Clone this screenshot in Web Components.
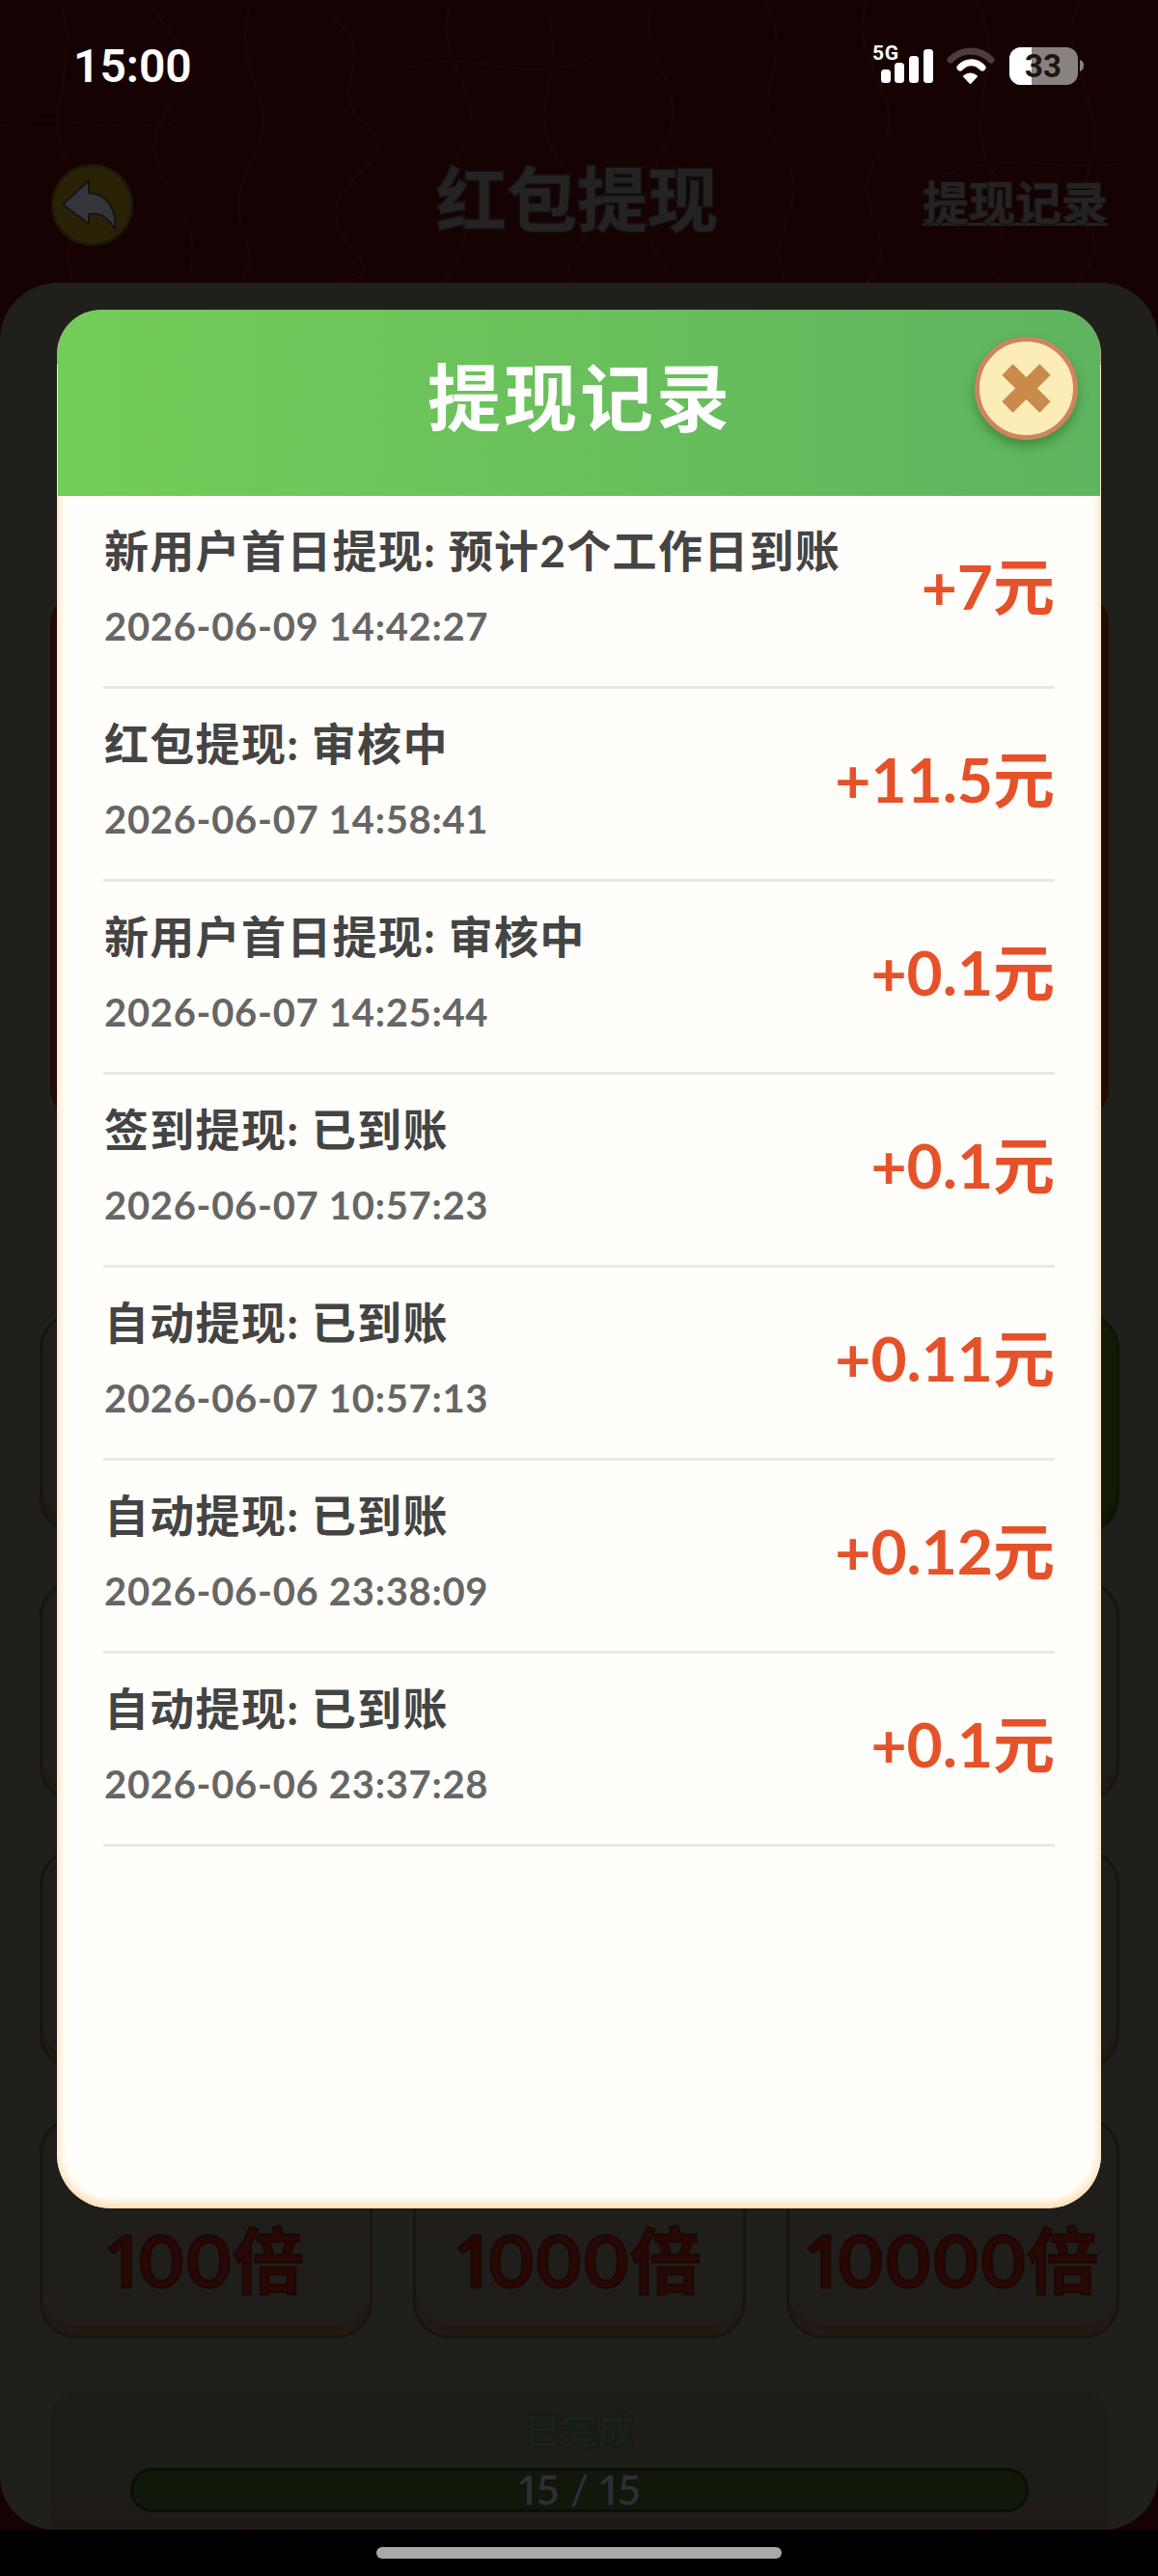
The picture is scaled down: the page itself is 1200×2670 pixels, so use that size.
<!DOCTYPE html>
<html lang="zh-CN"><head><meta charset="utf-8"><title>红包提现</title>
<style>
html,body{margin:0;padding:0;background:#000}
body{width:1200px;height:2670px;overflow:hidden;font-family:"Lato","Noto Sans CJK SC",sans-serif}
</style></head><body>
<app-screen>
  <status-bar slot="status"></status-bar>
  <nav-header slot="nav" heading="红包提现" link="提现记录"></nav-header>
  <main-panel slot="panel">
    <multi-btn></multi-btn><multi-btn></multi-btn><multi-btn tone="green"></multi-btn>
    <multi-btn></multi-btn><multi-btn></multi-btn><multi-btn></multi-btn>
    <multi-btn></multi-btn><multi-btn></multi-btn><multi-btn></multi-btn>
    <multi-btn>100倍</multi-btn><multi-btn>1000倍</multi-btn><multi-btn>10000倍</multi-btn>
  </main-panel>
  <record-modal slot="modal" heading="提现记录">
    <record-row><span slot="name">新用户首日提现: 预计2个工作日到账</span><span slot="time">2026-06-09 14:42:27</span><span slot="amount">+7元</span></record-row>
    <record-row><span slot="name">红包提现: 审核中</span><span slot="time">2026-06-07 14:58:41</span><span slot="amount">+11.5元</span></record-row>
    <record-row><span slot="name">新用户首日提现: 审核中</span><span slot="time">2026-06-07 14:25:44</span><span slot="amount">+0.1元</span></record-row>
    <record-row><span slot="name">签到提现: 已到账</span><span slot="time">2026-06-07 10:57:23</span><span slot="amount">+0.1元</span></record-row>
    <record-row><span slot="name">自动提现: 已到账</span><span slot="time">2026-06-07 10:57:13</span><span slot="amount">+0.11元</span></record-row>
    <record-row><span slot="name">自动提现: 已到账</span><span slot="time">2026-06-06 23:38:09</span><span slot="amount">+0.12元</span></record-row>
    <record-row><span slot="name">自动提现: 已到账</span><span slot="time">2026-06-06 23:37:28</span><span slot="amount">+0.1元</span></record-row>
  </record-modal>
</app-screen>
<script>
const CJK='"Noto Sans CJK SC",sans-serif';
const MIX='"Lato","Noto Sans CJK SC",sans-serif';
function def(name,html,init){
  customElements.define(name,class extends HTMLElement{
    constructor(){super();this.attachShadow({mode:'open'}).innerHTML=typeof html==='function'?html(this):html;}
    connectedCallback(){if(init)init(this);}
  });
}
def('app-screen',`<style>
:host{display:block;position:relative;width:1200px;height:2670px;background:#170203;overflow:hidden}
.top{position:relative;height:293px;display:flex;flex-direction:column}
.mid{position:relative;height:2329px}
.grain{position:absolute;left:0;top:0;width:1200px;height:2622px}
.home{position:relative;height:48px;background:#000;display:flex;justify-content:center;padding-top:18px;box-sizing:border-box}
.home i{display:block;width:420px;height:12px;border-radius:6px;background:#a9a9a9}
::slotted([slot=modal]){position:absolute;left:59px;top:321px}
</style>
<svg class="grain" viewBox="0 0 1200 2622" preserveAspectRatio="none" aria-hidden="true" fill="none" stroke="#1f0605" stroke-width="1.500">
<path d="M60 0C90 60 40 110 70 170S50 250 80 300"/><path d="M150 0C190 50 210 60 170 120S230 220 190 300"/>
<path d="M262 0C230 70 300 100 260 170S290 260 240 300"/><path d="M345 20C400 60 330 90 380 130S310 190 360 250 330 280 350 300"/>
<path d="M470 0C440 50 510 100 480 150S520 240 450 300"/><path d="M560 0C600 70 530 120 590 180S560 260 600 300"/>
<path d="M680 0C650 50 720 90 690 150S660 230 700 300"/><path d="M790 0C830 50 770 110 810 160S780 250 820 300"/>
<path d="M900 0C870 60 950 100 910 160S950 250 890 300"/><path d="M1010 0C1050 60 990 120 1030 180S1000 260 1040 300"/>
<path d="M1120 0C1090 50 1150 110 1130 170S1160 250 1110 300"/><path d="M0 130C80 110 120 150 200 120M420 70C500 50 540 90 610 60M980 180C1060 150 1110 190 1200 160"/>
</svg>
<div class="top"><slot name="status"></slot><slot name="nav"></slot></div>
<div class="mid"><slot name="panel"></slot></div>
<div class="home"><i></i></div>
<slot name="modal"></slot>`);

def('status-bar',`<style>
:host{display:flex;align-items:flex-start;justify-content:space-between;height:110px;position:relative;color:#fff}
.time{font:600 48px/1 Roboto,sans-serif;margin:45px 0 0 76px}
.icons{margin:41px 0 0 0;padding-right:76px;display:flex;align-items:flex-start}
svg{display:block}
text{font-family:Roboto,sans-serif;font-weight:700}
</style>
<span class="time">15:00</span>
<div class="icons"><svg width="224" height="52" viewBox="0 0 224 52">
<text x="4" y="21" font-size="21" fill="#fff" textLength="27">5G</text>
<rect x="13" y="31" width="10" height="14" rx="3.500" fill="#fff"/><rect x="27" y="24" width="10" height="21" rx="3.500" fill="#fff"/>
<rect x="42" y="17" width="10" height="28" rx="3.500" fill="#fff"/><rect x="57" y="10" width="10" height="35" rx="3.500" fill="#fff"/>
<path d="M85 21C97 9 115 9 127 21" stroke="#4b3d3d" stroke-width="7" stroke-linecap="round" fill="none"/>
<path d="M95 29C102 22 111 22 118 29" stroke="#fff" stroke-width="7" stroke-linecap="round" fill="none"/>
<path d="M99 38C103 35 108 35 112 38L105.500 45Z" fill="#fff" stroke="#fff" stroke-width="2" stroke-linejoin="round"/>
<rect x="146" y="8" width="71" height="39" rx="12" fill="#8a8280"/>
<path d="M158 8H169V47H158A12 12 0 0 1 146 35V20A12 12 0 0 1 158 8Z" fill="#fff"/>
<path d="M219 21C222 22 223 24 223 27S222 32 219 33Z" fill="#8a8280"/>
<text x="181" y="39" font-size="33" fill="#1b1515" text-anchor="middle">33</text>
</svg></div>`);

def('nav-header',h=>`<style>
:host{display:grid;grid-template-columns:1fr auto 1fr;align-items:center;height:85px;margin-top:60px;padding:0 52px 0 53px}
.back{width:85px;height:85px;display:block}
h1{margin:-20px 5px 0 0;font:700 73px/85px ${CJK};color:#252322;-webkit-text-stroke:3px #111;paint-order:stroke fill;white-space:nowrap}
a{justify-self:end;font:700 48px/1 ${CJK};color:#252322;-webkit-text-stroke:2px #111;paint-order:stroke fill;border-bottom:3px solid #252322;margin-top:-8px;white-space:nowrap}
</style>
<svg class="back" viewBox="0 0 85 85" aria-hidden="true"><circle cx="42.500" cy="42.500" r="41" fill="#2a2206" stroke="#1d1a05" stroke-width="3"/>
<path d="M12 42L39 17V30C57 30 69 48 66 68C59 55 51 50 39 52V62Z" fill="#34343b" stroke="#141414" stroke-width="2" stroke-linejoin="round"/></svg>
<h1>${h.getAttribute('heading')}</h1><a>${h.getAttribute('link')}</a>`);

def('main-panel',`<style>
:host{display:block;position:relative;height:2329px;box-sizing:border-box;background:#1f1f1c;border-radius:60px 60px 56px 56px;padding:322px 40px 0 41px}
.card{height:545px;margin:0 11px;background:#210b03;border-radius:32px}
.grid{display:grid;grid-template-columns:repeat(3,345px);grid-auto-rows:230px;gap:48px 42px;margin-top:200px}
</style>
<div class="card"></div>
<div class="grid"><slot></slot></div>
<progress-card label="已完成" value="15 / 15"></progress-card>`);

def('multi-btn',`<style>
:host{display:flex;align-items:center;justify-content:center;box-sizing:border-box;padding-top:67px;border:3px solid #181510;border-radius:38px;background:#1f1e1b;box-shadow:inset 0 -11px 0 #211a14;
font:700 74px/1 ${MIX};font-feature-settings:"pnum";color:#280803;-webkit-text-stroke:2px #1c0704;white-space:nowrap}
:host([tone=green]){background:#101a06;box-shadow:inset 0 -11px 0 #0e1705;border-color:#0d1405}
</style><slot></slot>`);

def('progress-card',h=>`<style>
:host{display:block;box-sizing:border-box;height:145px;margin:53px 11px 0;padding-top:17px;border-radius:32px 32px 0 0;background:linear-gradient(#1e1c18 70%,#221915);text-align:center}
.l{font:700 38px/46px ${CJK};color:#182418;-webkit-text-stroke:1px #141a12;height:46px}
.bar{box-sizing:border-box;height:46px;margin:18px 83px 0 83px;border:3px solid #0a0e07;border-radius:23px;background:#0f1809;
font:900 44px/38px ${MIX};font-feature-settings:"pnum";color:#2e2e33;-webkit-text-stroke:1px #10120e}
</style><div class="l">${h.getAttribute('label')}</div><div class="bar">${h.getAttribute('value')}</div>`);

def('record-modal',h=>`<style>
:host{display:flex;flex-direction:column;width:1082px;height:1968px;border-radius:46px 46px 56px 56px;background:linear-gradient(transparent 57px,#fffefa 57px);box-shadow:inset 0 0 12px #ffe3c0,inset 0 -5px 8px #fbdcb0;overflow:hidden}
header{position:relative;flex:none;height:193px;margin:0 1px;border-radius:44px 44px 0 0;background:linear-gradient(90deg,#74cc58,#5fb45f);display:flex;align-items:center;justify-content:center}
h2{margin:0 -2px 20px 0;font:700 76px/1 ${CJK};color:#fff;letter-spacing:3px;white-space:nowrap}
.list{padding:0 48px}
.close{position:absolute;left:950px;top:28px}
svg{display:block;filter:drop-shadow(0 6px 6px rgba(0,60,0,.35))}
</style>
<header><h2>${h.getAttribute('heading')}</h2>
<svg class="close" width="107" height="107" viewBox="0 0 107 107" aria-label="关闭"><circle cx="53.500" cy="53.500" r="51" fill="#fcedb6" stroke="#cf855c" stroke-width="5"/>
<path d="M34 34L73 73M73 34L34 73" stroke="#c98a4b" stroke-width="16"/></svg></header>
<div class="list"><slot></slot></div>`);

def('record-row',`<style>
:host{display:flex;justify-content:space-between;align-items:flex-start;box-sizing:border-box;height:200px;border-bottom:3px solid #e8e8e6;font-feature-settings:"pnum"}
.l{padding:27px 0 0 1px}
.n{font:700 46px/60px ${MIX};color:#444;white-space:nowrap;letter-spacing:1.3px}
.t{font:700 40px/50px Lato,sans-serif;color:#666;margin-top:23px;white-space:nowrap;letter-spacing:.7px}
.a{font:700 64px/80px ${MIX};color:#e5522a;margin:54px 0 0 0;white-space:nowrap}
</style>
<div class="l"><div class="n"><slot name="name"></slot></div><div class="t"><slot name="time"></slot></div></div>
<div class="a"><slot name="amount"></slot></div>`);
</script>
</body></html>
